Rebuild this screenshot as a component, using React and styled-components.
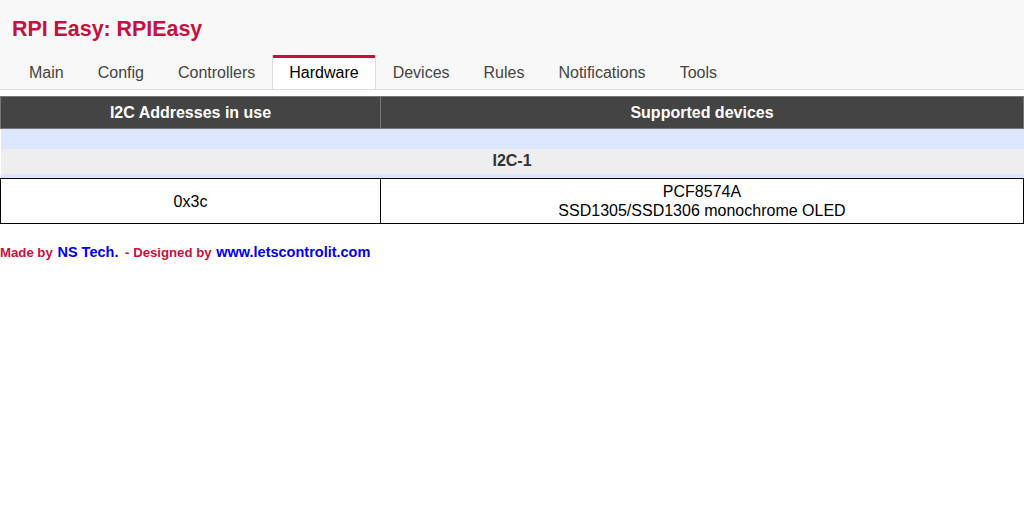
import React from 'react';
import styled, { createGlobalStyle } from 'styled-components';

const GlobalStyle = createGlobalStyle`
  html, body {
    margin: 0;
    padding: 0;
    background: #fff;
    font-family: "Liberation Sans", Arial, sans-serif;
    font-size: 16px;
    color: #000;
  }
`;

const Header = styled.header`
  background: #f8f8f8;
  border-bottom: 1px solid #ddd;
  padding: 17px 12px 0;
`;

const Title = styled.h1`
  margin: 0 0 14px;
  font-size: 21.4px;
  line-height: 24px;
  font-weight: bold;
  color: #c8103e;
`;

const TabBar = styled.nav`
  display: flex;
`;

const Tab = styled.a`
  display: block;
  padding: 6px 16px 7px;
  line-height: 18px;
  font-size: 16px;
  text-decoration: none;
  color: ${(p) => (p.$active ? '#000' : '#444')};
  background: ${(p) => (p.$active ? '#fff' : 'transparent')};
  border: 1px solid ${(p) => (p.$active ? '#ddd' : 'transparent')};
  border-top: 3px solid ${(p) => (p.$active ? '#c8103e' : 'transparent')};
  border-bottom: none;
  border-radius: 2px 2px 0 0;
  cursor: pointer;
`;

const Table = styled.table`
  width: 100%;
  margin-top: 6px;
  border-collapse: collapse;
  border-spacing: 0;
`;

const HeadCell = styled.th`
  background: #444;
  color: #fff;
  font-weight: bold;
  font-size: 16px;
  line-height: 18px;
  height: 31px;
  padding: 0 4px;
  border: 1px solid #777;
  text-align: center;
  width: ${(p) => p.$width || 'auto'};
`;

const SpacerRow = styled.tr`
  background: #dde6ff;
  height: ${(p) => p.$height}px;
`;

const SectionCell = styled.td`
  background: #eee;
  color: #333;
  font-weight: bold;
  text-align: center;
  height: 25px;
  padding: 0;
  line-height: 18px;
`;

const Cell = styled.td`
  border: 1px solid #000;
  padding: 3px 4px;
  line-height: 19px;
  text-align: center;
  vertical-align: middle;
`;

const Footer = styled.footer`
  padding-top: 19px;
  font-size: 13.2px;
  font-weight: bold;
  color: #c8103e;
  line-height: 18px;
`;

const FootLink = styled.a`
  color: #0000ee;
  font-size: 14.5px;
  text-decoration: none;
  margin: 0 ${(p) => p.$gap || 0}px 0 1px;
`;

const tabs = ['Main', 'Config', 'Controllers', 'Hardware', 'Devices', 'Rules', 'Notifications', 'Tools'];

const devices = [
  { address: '0x3c', names: ['PCF8574A', 'SSD1305/SSD1306 monochrome OLED'] },
];

export default function App() {
  return (
    <>
      <GlobalStyle />
      <Header>
        <Title>RPI Easy: RPIEasy</Title>
        <TabBar>
          {tabs.map((t) => (
            <Tab key={t} $active={t === 'Hardware'}>
              {t}
            </Tab>
          ))}
        </TabBar>
      </Header>
      <Table>
        <thead>
          <tr>
            <HeadCell $width="371px">I2C Addresses in use</HeadCell>
            <HeadCell>Supported devices</HeadCell>
          </tr>
        </thead>
        <tbody>
          <SpacerRow $height={20}>
            <td colSpan={2} />
          </SpacerRow>
          <tr>
            <SectionCell colSpan={2}>I2C-1</SectionCell>
          </tr>
          <SpacerRow $height={5}>
            <td colSpan={2} />
          </SpacerRow>
          {devices.map((d) => (
            <tr key={d.address}>
              <Cell>{d.address}</Cell>
              <Cell>
                {d.names.map((n) => (
                  <div key={n}>{n}</div>
                ))}
              </Cell>
            </tr>
          ))}
        </tbody>
      </Table>
      <Footer>
        Made by <FootLink href="#" $gap={3}>NS Tech.</FootLink> - Designed by{' '}
        <FootLink href="#">www.letscontrolit.com</FootLink>
      </Footer>
    </>
  );
}
